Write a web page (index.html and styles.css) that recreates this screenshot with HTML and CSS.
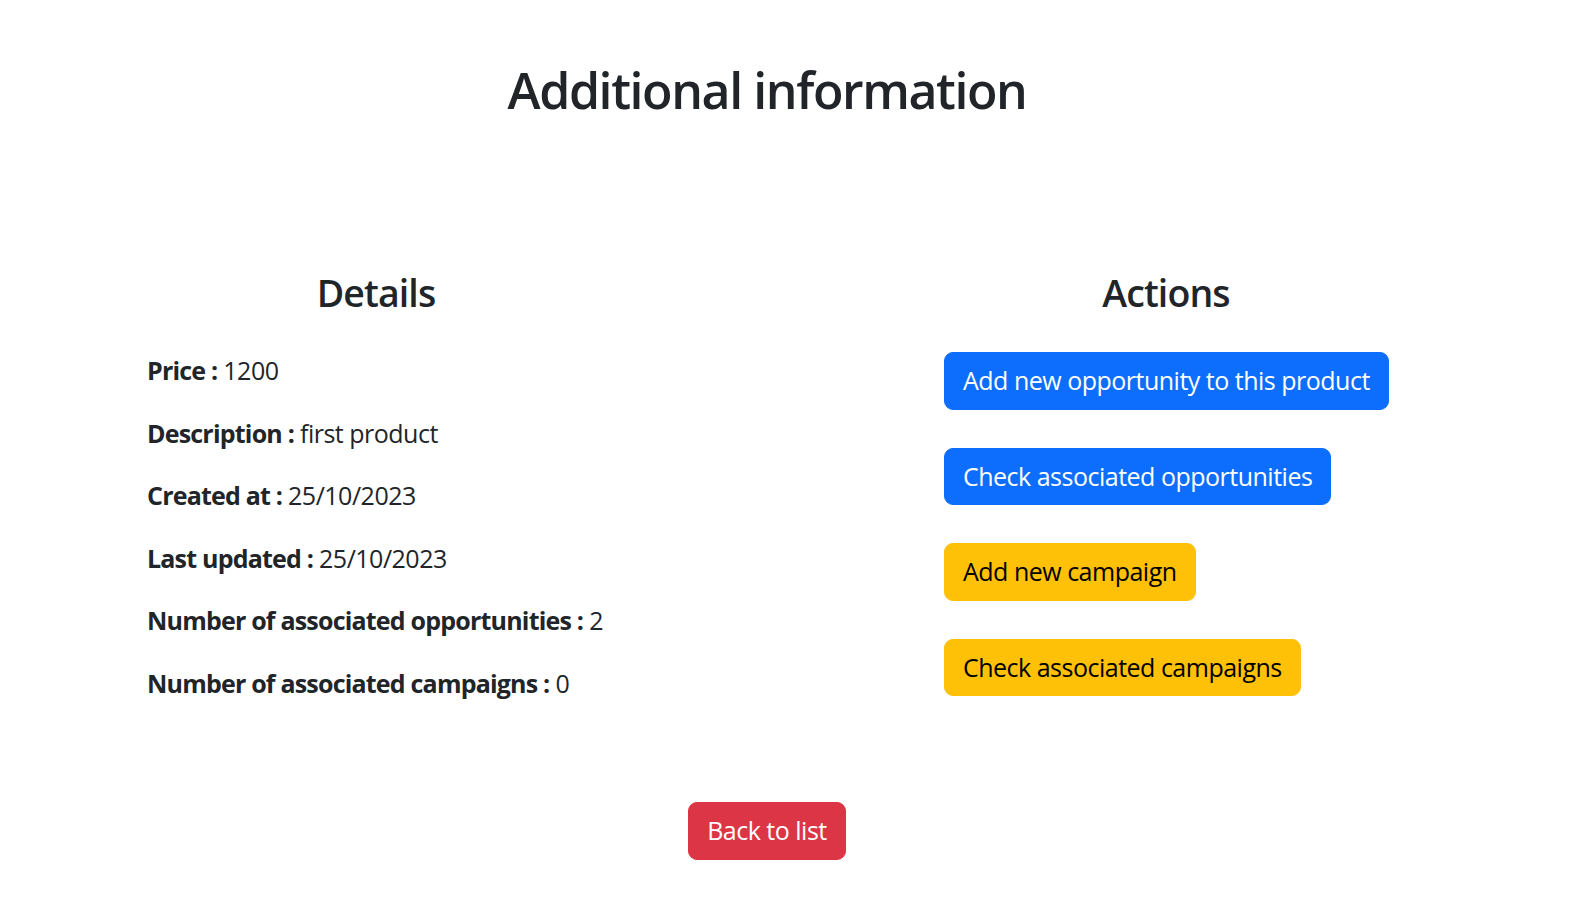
FILE: index.html
```html
<!DOCTYPE html>
<html lang="en">
<head>
<meta charset="utf-8">
<title>Additional information</title>
<link rel="stylesheet" href="styles.css">
</head>
<body>
<div class="page">
  <h1 class="title">Additional information</h1>
  <div class="columns">
    <section class="details">
      <h2 class="col-title">Details</h2>
      <p class="row"><b>Price :</b> 1200</p>
      <p class="row"><b>Description :</b> first product</p>
      <p class="row"><b>Created at :</b> 25/10/2023</p>
      <p class="row"><b>Last updated :</b> 25/10/2023</p>
      <p class="row"><b>Number of associated opportunities :</b> 2</p>
      <p class="row"><b>Number of associated campaigns :</b> 0</p>
    </section>
    <section class="actions">
      <h2 class="col-title">Actions</h2>
      <div class="btn-list">
        <a class="btn btn-primary" href="#">Add new opportunity to this product</a>
        <a class="btn btn-primary" href="#">Check associated opportunities</a>
        <a class="btn btn-warning" href="#">Add new campaign</a>
        <a class="btn btn-warning" href="#">Check associated campaigns</a>
      </div>
    </section>
  </div>
  <div class="footer">
    <a class="btn btn-danger" href="#">Back to list</a>
  </div>
</div>
</body>
</html>
```

FILE: styles.css
```css
* { box-sizing: border-box; }
html, body { margin: 0; padding: 0; background: #fff; }
body {
  font-family: "Open Sans", "Noto Sans", sans-serif;
  font-size: 25px;
  line-height: 37.5px;
  letter-spacing: -0.5px;
  color: #212529;
}
.page {
  width: 1534px;
  padding-top: 60px;
}
.title {
  margin: 0;
  font-size: 50px;
  line-height: 60px;
  font-weight: 600;
  letter-spacing: -1.4px;
  text-align: center;
}
.columns {
  display: flex;
  align-items: flex-start;
  margin-top: 150px;
  padding-left: 147px;
  gap: 339px;
}
.details { width: 458px; }
.actions { width: 444px; }
.col-title {
  margin: 0 0 37px;
  font-size: 37.5px;
  line-height: 45px;
  font-weight: 600;
  letter-spacing: -0.9px;
  text-align: center;
}
.row { margin: 0 0 25px; white-space: nowrap; }
.row b { font-weight: 700; letter-spacing: -0.8px; }
.btn-list {
  display: flex;
  flex-direction: column;
  align-items: flex-start;
  gap: 38px;
}
.btn {
  display: inline-block;
  padding: 9px 18px;
  border: 1.5px solid transparent;
  border-radius: 9px;
  font-size: 25px;
  line-height: 37.5px;
  text-decoration: none;
  white-space: nowrap;
}
.btn-primary { background: #0d6efd; border-color: #0d6efd; color: #fff; }
.btn-warning { background: #ffc107; border-color: #ffc107; color: #000; }
.btn-danger { background: #dc3545; border-color: #dc3545; color: #fff; }
.footer {
  margin-top: 75px;
  text-align: center;
}
```
